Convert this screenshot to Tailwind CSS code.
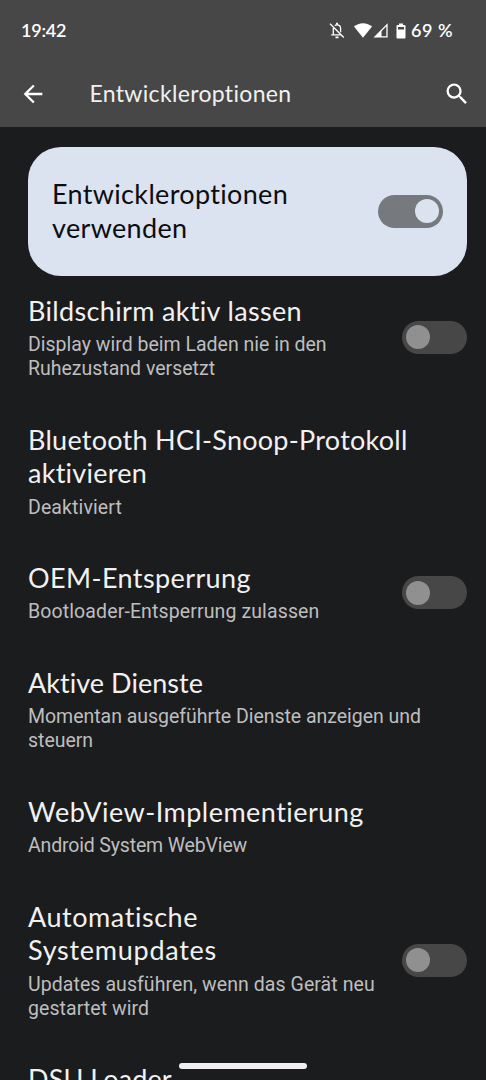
<!DOCTYPE html>
<html lang="de">
<head>
    <meta charset="UTF-8">
    <meta name="viewport" content="width=device-width, initial-scale=1">
    <title>Entwickleroptionen</title>
    <script src="https://cdn.jsdelivr.net/npm/@tailwindcss/browser@4"></script>
</head>
<body class="bg-[#1b1c1e] font-['Lato',sans-serif]">
  <div class="relative h-screen w-full overflow-hidden flex flex-col">
    <!-- Header -->
    <header class="h-[127px] shrink-0 bg-[#474747] text-white">
      <!-- Status bar -->
      <div class="flex h-[61px] items-center pl-[21px] pr-[33px] text-[18px] font-semibold">
        <span class="tracking-[-0.25px]">19:42</span>
        <svg class="ml-auto h-[17px] w-[16px]" viewBox="0 0 16 17" fill="none" stroke="#fff" stroke-width="1.3">
          <path d="M1 1.8 14.8 15.5"/>
          <path d="M5.7 3.6C6.3 3.1 7 2.9 8 2.9c2.2 0 3.6 1.6 3.6 3.8v3.5M4.3 5.9v6.8M2.3 12.8h9.5"/>
          <path d="M8 .8v2M6.5 15.4h3" stroke-width="1.9"/>
        </svg>
        <svg class="ml-[9px] h-[15px] w-[18px]" viewBox="0 0 18 15" fill="#fff">
          <path d="M9 .2C5.5.2 2.4 1.5 0 3.6L9 14.7l9-11.1C15.6 1.5 12.5.2 9 .2z"/>
        </svg>
        <svg class="ml-[1px] h-[15px] w-[15px]" viewBox="0 0 15 15">
          <path d="M14 1.9V13.8H2.1z" fill="none" stroke="#fff" stroke-width="1.3"/>
          <path d="M8.5 7.2V14H1.7z" fill="#fff"/>
        </svg>
        <svg class="ml-[8px] h-[16px] w-[10px]" viewBox="0 0 10 16">
          <path d="M3 .5h4V2h1.5q1 0 1 1v11.5q0 1-1 1h-7q-1 0-1-1V3q0-1 1-1H3z" fill="#fff"/>
          <path d="M2 4h6v2.500H2z" fill="#474747"/>
        </svg>
        <span class="ml-[5px] tracking-[0.5px]">69 %</span>
      </div>
      <!-- App bar -->
      <div class="flex h-[66px] items-center pl-[19px] pr-[15px]">
        <svg class="h-[28px] w-[28px]" viewBox="0 0 24 24" fill="#fff">
          <path d="M20 11H7.83l5.59-5.59L12 4l-8 8 8 8 1.41-1.41L7.83 13H20v-2z"/>
        </svg>
        <h1 class="ml-[42.5px] pb-[2px] text-[23px] tracking-[0.33px] text-[#f1f1f1]">Entwickleroptionen</h1>
        <svg class="ml-auto h-[28px] w-[28px]" viewBox="0 0 24 24" fill="#fff">
          <path d="M15.5 14h-.79l-.28-.27A6.471 6.471 0 0 0 16 9.500 6.500 6.500 0 1 0 9.500 16c1.610 0 3.090-.59 4.230-1.570l.27.28v.79l5 4.990L20.490 19l-4.990-5zm-6 0C7.010 14 5 11.990 5 9.500S7.010 5 9.500 5 14 7.010 14 9.500 11.990 14 9.500 14z"/>
        </svg>
      </div>
    </header>

    <main class="flex flex-col pt-[19.5px] pl-[28px] pr-[19px]">
      <!-- Main switch -->
      <section class="flex h-[129px] shrink-0 items-center justify-between rounded-[33px] bg-[#dce3f0] px-6">
        <h2 class="text-[27px] leading-[33.75px] tracking-[0.33px] text-[#0c0d0f]">Entwickleroptionen<br>verwenden</h2>
        <div class="flex h-[33px] w-[65.5px] items-center justify-end rounded-full bg-[#767a7e] px-[4.5px]">
          <div class="size-6 rounded-full bg-[#dce3f0]"></div>
        </div>
      </section>

      <ul class="mt-[18.2px] flex flex-col gap-[41.6px] text-[27px] leading-[33.75px] text-[#f1f1f1]">
        <li class="flex items-center justify-between">
          <div>
            <h3 class="tracking-[0.34px]">Bildschirm aktiv lassen</h3>
            <p class="mt-[5.5px] font-['Roboto',sans-serif] text-[19.5px] leading-6 text-[#bebebe]">Display wird beim Laden nie in den<br>Ruhezustand versetzt</p>
          </div>
          <div class="flex h-[33px] w-[65.5px] shrink-0 items-center rounded-full bg-[#474747] px-[4.5px]">
            <div class="size-6 rounded-full bg-[#909090]"></div>
          </div>
        </li>
        <li>
          <h3 class="tracking-[0.26px]">Bluetooth HCI-Snoop-Protokoll<br>aktivieren</h3>
          <p class="mt-[5.5px] font-['Roboto',sans-serif] text-[19.5px] leading-6 tracking-[0.11px] text-[#bebebe]">Deaktiviert</p>
        </li>
        <li class="flex items-center justify-between">
          <div>
            <h3 class="tracking-[0.4px]">OEM-Entsperrung</h3>
            <p class="mt-[5.5px] font-['Roboto',sans-serif] text-[19.5px] leading-6 tracking-[0.12px] text-[#bebebe]">Bootloader-Entsperrung zulassen</p>
          </div>
          <div class="flex h-[33px] w-[65.5px] shrink-0 items-center rounded-full bg-[#474747] px-[4.5px]">
            <div class="size-6 rounded-full bg-[#909090]"></div>
          </div>
        </li>
        <li>
          <h3 class="tracking-[0.04px]">Aktive Dienste</h3>
          <p class="mt-[5.5px] font-['Roboto',sans-serif] text-[19.5px] leading-6 tracking-[-0.03px] text-[#bebebe]">Momentan ausgeführte Dienste anzeigen und<br>steuern</p>
        </li>
        <li>
          <h3 class="tracking-[0.47px]">WebView-Implementierung</h3>
          <p class="mt-[5.5px] font-['Roboto',sans-serif] text-[19.5px] leading-6 tracking-[-0.16px] text-[#bebebe]">Android System WebView</p>
        </li>
        <li class="flex items-center justify-between">
          <div>
            <h3><span class="tracking-[0.55px]">Automatische</span><br><span class="tracking-[0.73px]">Systemupdates</span></h3>
            <p class="mt-[5.5px] font-['Roboto',sans-serif] text-[19.5px] leading-6 tracking-[0.07px] text-[#bebebe]">Updates ausführen, wenn das Gerät neu<br>gestartet wird</p>
          </div>
          <div class="flex h-[33px] w-[65.5px] shrink-0 items-center rounded-full bg-[#474747] px-[4.5px]">
            <div class="size-6 rounded-full bg-[#909090]"></div>
          </div>
        </li>
        <li>
          <h3 class="tracking-[0.1px]">DSU Loader</h3>
        </li>
      </ul>
    </main>

    <!-- Gesture bar -->
    <div class="absolute bottom-[11.5px] left-[179px] h-[5.5px] w-[128px] rounded-full bg-[#f1eff1]"></div>
  </div>
</body>
</html>
